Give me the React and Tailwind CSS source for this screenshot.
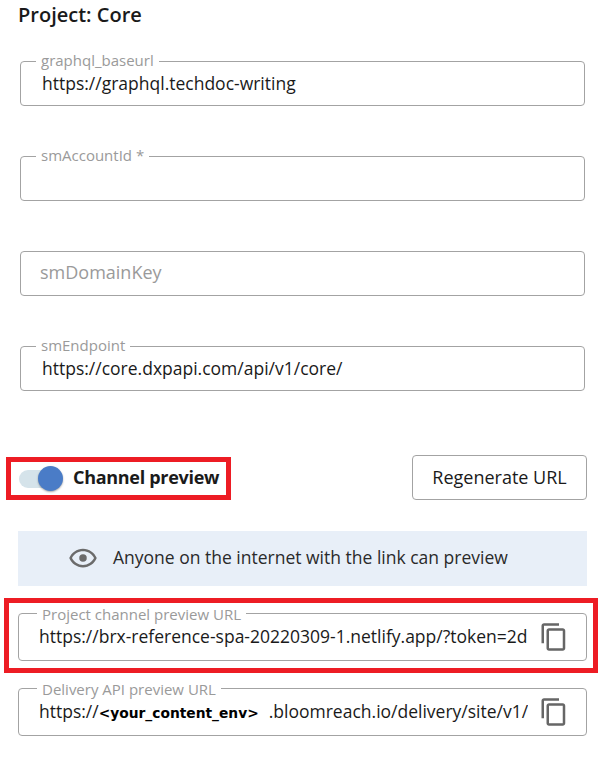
import React from "react";

const COPY_PATH =
  "M16 1H4c-1.1 0-2 .9-2 2v14h2V3h12V1zm3 4H8c-1.1 0-2 .9-2 2v14c0 1.1.9 2 2 2h11c1.1 0 2-.9 2-2V7c0-1.1-.9-2-2-2zm0 16H8V7h11v14z";
const EYE_PATH =
  "M12 6.5c3.79 0 7.17 2.13 8.82 5.5-1.65 3.37-5.02 5.5-8.82 5.5S4.83 15.37 3.18 12C4.83 8.63 8.21 6.5 12 6.5m0-2C7 4.5 2.73 7.61 1 12c1.73 4.39 6 7.5 11 7.5s9.27-3.11 11-7.5c-1.73-4.39-6-7.5-11-7.5zM12 9a3 3 0 1 0 0 6 3 3 0 0 0 0-6z";

function Field({ label, value, placeholder }) {
  return (
    <div className="relative h-[45px] mx-5 w-[565px] rounded border border-[#a3a3a3] flex items-center pl-[21px] text-[17.5px] text-[#1a1a1a]">
      {label && (
        <span className="absolute left-[15px] -top-[12px] bg-white px-[5px] text-[15px] leading-5 text-[#9a9a9a]">{label}</span>
      )}
      {placeholder ? (
        <span className="-ml-[2px] mb-[3px] text-lg text-[#9a9a9a]">{placeholder}</span>
      ) : (
        <span className="mb-[1px]">{value}</span>
      )}
    </div>
  );
}

function CopyIcon() {
  return (
    <svg viewBox="0 0 24 24" className="w-[30px] h-[30px] fill-[#666666] shrink-0 ml-[11px]">
      <path d={COPY_PATH} />
    </svg>
  );
}

function UrlField({ label, children, className }) {
  return (
    <div className={`relative h-[48px] w-[569px] rounded border border-[#a3a3a3] flex items-center pl-[21px] pr-[17px] text-[#1a1a1a] ${className || ""}`}>
      <span className="absolute left-[18px] -top-[10px] bg-white px-[5px] text-[15px] leading-5 text-[#9a9a9a]">{label}</span>
      <div className="w-[489px] overflow-hidden whitespace-nowrap text-[17.5px] -ml-[1px] mb-[1px]">{children}</div>
      <CopyIcon />
    </div>
  );
}

export default function App() {
  return (
    <div className="w-[604px] h-[759px] bg-white overflow-hidden font-['Open_Sans',sans-serif]">
      <h1 className="pl-[18px] h-[61px] pt-[2px] text-xl leading-[26px] font-semibold text-[#1a1a1a]">Project: Core</h1>

      <div className="flex flex-col gap-[50px]">
        <Field label="graphql_baseurl" value="https://graphql.techdoc-writing" />
        <Field label="smAccountId *" value="" />
        <Field placeholder="smDomainKey" />
        <Field label="smEndpoint" value="https://core.dxpapi.com/api/v1/core/" />
      </div>

      {/* Channel preview row */}
      <div className="mt-[64px] flex items-start justify-between pl-[6px] pr-[17px]">
        <div className="mt-[2px] w-[225px] h-[43px] border-[5px] border-[#ed1c24] flex items-center pl-2">
          <div className="relative w-[41px] h-[18px] rounded-full bg-[#d5e3ea]">
            <div className="absolute -right-[3px] -top-1 w-[25px] h-[25px] rounded-full bg-[#4a7cc7] shadow-[0_1px_2px_rgba(0,0,0,0.35)]" />
          </div>
          <span className="ml-[13px] mb-[4px] text-lg font-bold tracking-[-0.3px] text-[#1a1a1a]">Channel preview</span>
        </div>
        <button className="w-[175px] h-[45px] pb-[2px] rounded border border-[#a3a3a3] text-lg text-[#1a1a1a]">Regenerate URL</button>
      </div>

      <div className="mt-[31px] ml-[18px] w-[569px] h-[55px] bg-[#e8eff8] flex items-center pl-[50px] text-[#2a2a2a]">
        <svg viewBox="0 0 24 24" className="w-[30px] h-[30px] mb-[2px] fill-[#6b6b6b] shrink-0">
          <path d={EYE_PATH} />
        </svg>
        <span className="ml-[15px] mb-[3px] text-[17.5px]">Anyone on the internet with the link can preview</span>
      </div>

      <div className="mt-3 ml-1 w-[594px] h-[75px] border-[5px] border-[#ed1c24] flex items-center pl-[9px] pt-[2px]">
        <UrlField label="Project channel preview URL">
          https://brx-reference-spa-20220309-1.netlify.app/?token=2d1
        </UrlField>
      </div>

      <UrlField label="Delivery API preview URL" className="mt-[15px] ml-[18px]">
        https://<span className="font-['DejaVu_Sans',sans-serif] font-bold text-[13.8px] text-black mr-[10px]">&lt;your_content_env&gt;</span>.bloomreach.io/delivery/site/v1/c
      </UrlField>
    </div>
  );
}
